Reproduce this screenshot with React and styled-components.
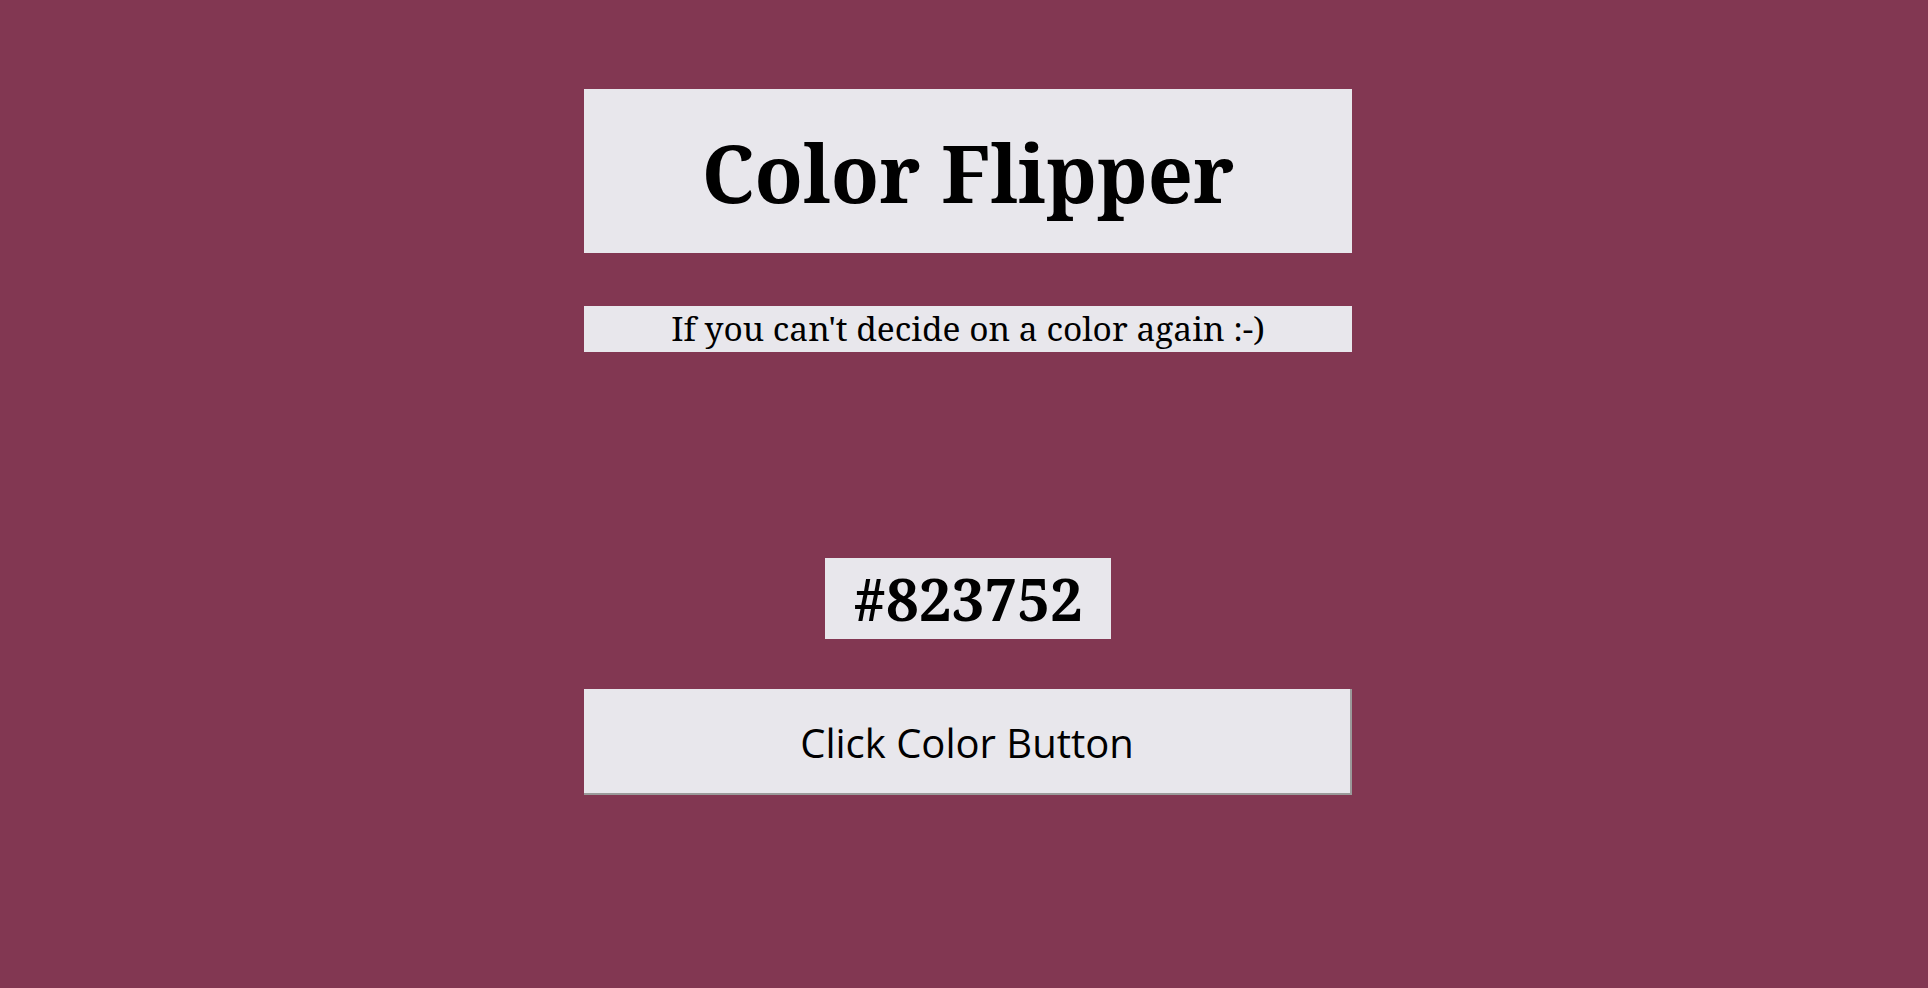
import React, { useState } from "react";
import styled, { createGlobalStyle } from "styled-components";

const Global = createGlobalStyle`
  html, body { margin: 0; padding: 0; }
  body { background: ${(p) => p.$bg}; min-height: 100vh; }
`;

const SERIF = `"Noto Serif", "DejaVu Serif", serif`;

const Page = styled.main`
  box-sizing: border-box;
  min-height: 100vh;
  padding: 89px 0 0 8px;
  display: flex;
  flex-direction: column;
  align-items: center;
  background: ${(p) => p.$bg};
`;

const Panel = styled.div`
  box-sizing: border-box;
  width: 768px;
  background: #e8e7ec;
  color: #000;
  display: flex;
  align-items: center;
  justify-content: center;
`;

const TitleBox = styled(Panel)`
  height: 164px;
`;

const Title = styled.h1`
  margin: 0;
  font-family: ${SERIF};
  font-weight: 700;
  font-size: 79px;
  line-height: 1;
  padding-top: 3px;
`;

const Subtitle = styled(Panel).attrs({ as: "p" })`
  margin: 53px 0 0;
  height: 46px;
  font-family: ${SERIF};
  font-size: 33.5px;
  line-height: 1;
`;

const HexBox = styled.div`
  box-sizing: border-box;
  margin-top: 206px;
  width: 286px;
  height: 81px;
  background: #e8e7ec;
  display: flex;
  align-items: center;
  justify-content: center;
  font-family: ${SERIF};
  font-weight: 700;
  font-size: 58px;
  line-height: 1;
  color: #000;
`;

const FlipButton = styled.button`
  box-sizing: border-box;
  margin-top: 50px;
  width: 768px;
  height: 106px;
  background: #e8e7ec;
  border: none;
  border-right: 2px solid #9a9a9a;
  border-bottom: 2px solid #9a9a9a;
  font-family: "Open Sans", sans-serif;
  font-size: 40px;
  color: #000;
  cursor: pointer;
  padding: 3px 0 0;
`;

export default function App() {
  const [color, setColor] = useState("#823752");
  const flip = () => {
    const hex =
      "#" +
      Math.floor(Math.random() * 0xffffff)
        .toString(16)
        .padStart(6, "0");
    setColor(hex);
  };
  return (
    <>
      <Global $bg={color} />
      <Page $bg={color}>
        <TitleBox>
          <Title>Color Flipper</Title>
        </TitleBox>
        <Subtitle>If you can't decide on a color again :-)</Subtitle>
        <HexBox>{color}</HexBox>
        <FlipButton onClick={flip}>Click Color Button</FlipButton>
      </Page>
    </>
  );
}
